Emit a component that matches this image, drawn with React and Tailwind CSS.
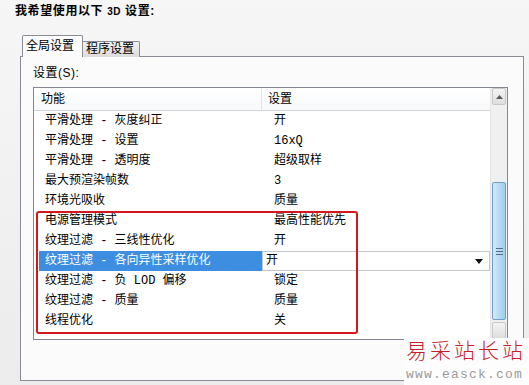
const rows = [
  { name: "平滑处理 - 灰度纠正", value: "开" },
  { name: "平滑处理 - 设置", value: "16xQ" },
  { name: "平滑处理 - 透明度", value: "超级取样" },
  { name: "最大预渲染帧数", value: "3" },
  { name: "环境光吸收", value: "质量" },
  { name: "电源管理模式", value: "最高性能优先" },
  { name: "纹理过滤 - 三线性优化", value: "开" },
  { name: "纹理过滤 - 各向异性采样优化", value: "开", selected: true },
  { name: "纹理过滤 - 负 LOD 偏移", value: "锁定" },
  { name: "纹理过滤 - 质量", value: "质量" },
  { name: "线程优化", value: "关" },
];

const mono = { fontFamily: '"Liberation Mono", "Noto Sans CJK SC", monospace' };

const Row = ({ name, value, selected }) => (
  <div className="flex h-[20px] text-[12px] leading-[20px]" style={mono}>
    <div className="w-[228px] pl-[5px] shrink-0">
      <div
        className={
          selected
            ? "h-full pl-[6px] bg-[#3d8ee0] text-white whitespace-nowrap"
            : "h-full pl-[6px] text-black whitespace-nowrap"
        }
      >
        {name}
      </div>
    </div>
    {selected ? (
      <div className="flex-1 flex items-center justify-between border border-[#c4c6cc] bg-white pl-[3px] pr-[6px]">
        <span className="leading-[18px]">{value}</span>
        <svg width="8" height="5" viewBox="0 0 8 5">
          <path d="M0 0h8L4 5z" fill="#111" />
        </svg>
      </div>
    ) : (
      <div className="flex-1 pl-[12px] text-black">{value}</div>
    )}
  </div>
);

const ScrollBar = () => (
  <div className="w-[17px] shrink-0 flex flex-col bg-[#f0f0f0] border-l border-[#e6e6e6] px-[1px]">
    <div className="h-[17px] flex items-center justify-center border border-[#c8c8c8] bg-gradient-to-b from-[#f4f4f4] to-[#dedede] rounded-[2px]">
      <svg width="7" height="4" viewBox="0 0 7 4">
        <path d="M0 4L3.5 0L7 4z" fill="#5a5a5a" />
      </svg>
    </div>
    <div className="mt-[77px] h-[138px] flex flex-col items-center justify-center gap-[2px] border border-[#6f9fc4] rounded-[2px] bg-gradient-to-r from-[#d4eaf8] via-[#b6dbf2] to-[#9fcdeb]">
      <div className="w-[7px] h-[1px] bg-[#4c6f8a]" />
      <div className="w-[7px] h-[1px] bg-[#4c6f8a]" />
      <div className="w-[7px] h-[1px] bg-[#4c6f8a]" />
    </div>
    <div className="mt-auto h-[17px] border border-[#c8c8c8] bg-gradient-to-b from-[#f4f4f4] to-[#dedede] rounded-[2px]" />
  </div>
);

export default function App() {
  return (
    <div
      className="relative w-[529px] h-[385px] overflow-hidden bg-gradient-to-b from-[#f6f6f6] to-[#ececec] text-black"
      style={{ fontFamily: '"Liberation Sans", "Noto Sans CJK SC", sans-serif' }}
    >
      <div className="pl-[15px] pt-[3px] h-[35px] text-[12px] font-bold tracking-[0.6px] leading-[16px]">
        我希望使用以下 <span className="text-[10px]">3D</span> 设置:
      </div>

      <div className="flex items-end h-[22px] ml-[22px]">
        <div className="relative z-10 h-[22px] w-[61px] border border-b-0 border-[#898c95] bg-[#fcfcfc] rounded-t-[2px] text-[12px] leading-[20px] pl-[3px]">
          全局设置
        </div>
        <div className="h-[16px] w-[57px] border border-l-0 border-b-0 border-[#898c95] bg-gradient-to-b from-[#f2f2f2] to-[#dcdcdc] rounded-tr-[2px] text-[12px] leading-[15px] pl-[3px]">
          程序设置
        </div>
      </div>

      <div className="ml-[20px] -mt-[1px] w-[504px] h-[325px] border border-[#898c95] bg-[#fbfbfb] pl-[12px] pt-[8px]">
        <div className="h-[16px] text-[12px] leading-[16px] tracking-[0.5px]">
          设置(S):
        </div>
        <div className="relative mt-[6px] w-[475px] h-[253px] border border-[#828790] bg-white flex">
          <div className="w-[456px] shrink-0">
            <div className="flex h-[23px] border-b border-[#d5d5d5] bg-gradient-to-b from-white to-[#f7f8fa] text-[12px] leading-[22px]">
              <div className="w-[228px] pl-[7px] border-r border-[#e3e3e3]">功能</div>
              <div className="flex-1 pl-[6px]">设置</div>
            </div>
            {rows.map((r) => (
              <Row key={r.name} {...r} />
            ))}
          </div>
          <ScrollBar />
          <div className="absolute left-[2px] top-[123px] w-[322px] h-[123px] border-2 border-[#d4161d] rounded-[3px] pointer-events-none" />
        </div>
      </div>

      <div className="absolute right-0 bottom-0 w-[125px] h-[47px] bg-[#fdfdfd] flex flex-col items-start pl-[2px]">
        <div className="whitespace-nowrap text-[21px] leading-[26px] tracking-[3px] text-[#c5202a] font-light">
          易采站长站
        </div>
        <div
          className="whitespace-nowrap text-[13px] leading-[16px] tracking-[1.2px] text-[#9a9a9a] mt-[3px]"
          style={{ fontFamily: '"Liberation Mono", monospace' }}
        >
          www.easck.com
        </div>
      </div>
    </div>
  );
}
